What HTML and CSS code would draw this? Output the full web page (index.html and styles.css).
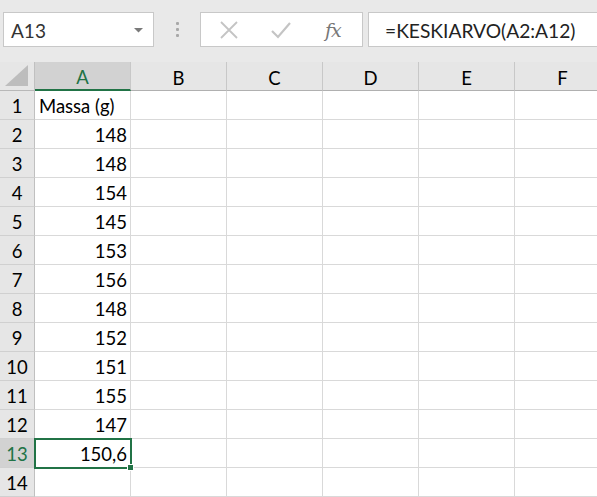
FILE: index.html
```html
<!DOCTYPE html>
<html>
<head>
<meta charset="utf-8">
<link rel="stylesheet" href="styles.css">
</head>
<body>
<div class="toolbar">
  <div class="namebox">
    <span class="name">A13</span>
    <svg class="dd" width="9" height="5" viewBox="0 0 9 5"><path d="M0 0 L9 0 L4.5 4.5 Z" fill="#7a7a7a"/></svg>
  </div>
  <div class="dots"><span></span><span></span><span></span></div>
  <div class="buttons">
    <svg class="btn-x" width="18" height="18" viewBox="0 0 18 18"><path d="M1 1 L17 17 M17 1 L1 17" stroke="#c4c4c4" stroke-width="1.8" fill="none"/></svg>
    <svg class="btn-v" width="20" height="18" viewBox="0 0 20 18"><path d="M1 10 L7 16 L19 2" stroke="#c4c4c4" stroke-width="2.2" fill="none"/></svg>
    <span class="fx">fx</span>
  </div>
  <div class="formula">=KESKIARVO(A2:A12)</div>
</div>
<div class="sheet">
  <div class="grid">
    <div class="corner"><svg width="26" height="22" viewBox="0 0 26 22"><path d="M24 0 L24 21 L1 21 Z" fill="#bdbdbd"/></svg></div>
    <div class="ch sel">A</div><div class="ch">B</div><div class="ch">C</div><div class="ch">D</div><div class="ch">E</div><div class="ch">F</div>

    <div class="rh">1</div><div class="c t">Massa (g)</div><div class="c"></div><div class="c"></div><div class="c"></div><div class="c"></div><div class="c"></div>
    <div class="rh">2</div><div class="c n">148</div><div class="c"></div><div class="c"></div><div class="c"></div><div class="c"></div><div class="c"></div>
    <div class="rh">3</div><div class="c n">148</div><div class="c"></div><div class="c"></div><div class="c"></div><div class="c"></div><div class="c"></div>
    <div class="rh">4</div><div class="c n">154</div><div class="c"></div><div class="c"></div><div class="c"></div><div class="c"></div><div class="c"></div>
    <div class="rh">5</div><div class="c n">145</div><div class="c"></div><div class="c"></div><div class="c"></div><div class="c"></div><div class="c"></div>
    <div class="rh">6</div><div class="c n">153</div><div class="c"></div><div class="c"></div><div class="c"></div><div class="c"></div><div class="c"></div>
    <div class="rh">7</div><div class="c n">156</div><div class="c"></div><div class="c"></div><div class="c"></div><div class="c"></div><div class="c"></div>
    <div class="rh">8</div><div class="c n">148</div><div class="c"></div><div class="c"></div><div class="c"></div><div class="c"></div><div class="c"></div>
    <div class="rh">9</div><div class="c n">152</div><div class="c"></div><div class="c"></div><div class="c"></div><div class="c"></div><div class="c"></div>
    <div class="rh">10</div><div class="c n">151</div><div class="c"></div><div class="c"></div><div class="c"></div><div class="c"></div><div class="c"></div>
    <div class="rh">11</div><div class="c n">155</div><div class="c"></div><div class="c"></div><div class="c"></div><div class="c"></div><div class="c"></div>
    <div class="rh">12</div><div class="c n">147</div><div class="c"></div><div class="c"></div><div class="c"></div><div class="c"></div><div class="c"></div>
    <div class="rh sel">13</div><div class="c n active">150,6<span class="handle"></span></div><div class="c"></div><div class="c"></div><div class="c"></div><div class="c"></div><div class="c"></div>
    <div class="rh">14</div><div class="c"></div><div class="c"></div><div class="c"></div><div class="c"></div><div class="c"></div><div class="c"></div>
  </div>
</div>
</body>
</html>
```

FILE: styles.css
```css
html, body {
  margin: 0;
  padding: 0;
  background: #ffffff;
  overflow: hidden;
}
body {
  width: 597px;
  height: 497px;
  font-family: Lato, "Open Sans", sans-serif;
  color: #000;
}
.toolbar {
  height: 62px;
  box-sizing: border-box;
  background: #e9e9e9;
  display: flex;
  align-items: flex-start;
  padding: 12px 0 0 3px;
}
.namebox {
  width: 151px;
  height: 35px;
  box-sizing: border-box;
  background: #fff;
  border: 1px solid #c8c8c8;
  display: flex;
  align-items: center;
  justify-content: space-between;
  padding: 1px 10px 0 7px;
  font-size: 19px;
  color: #333;
}
.dd { margin-top: 1px; }
.dots {
  width: 46px;
  height: 35px;
  display: flex;
  flex-direction: column;
  align-items: center;
  justify-content: center;
  gap: 3px;
}
.dots span {
  width: 3px;
  height: 3px;
  background: #a8a8a8;
  border-radius: 1px;
}
.buttons {
  width: 163px;
  height: 35px;
  box-sizing: border-box;
  background: #fff;
  border: 1px solid #c8c8c8;
  display: flex;
  align-items: center;
  padding-left: 19px;
}
.btn-x { margin-right: 33px; }
.btn-v { margin-right: 34px; }
.fx {
  font-family: "DejaVu Serif", "Liberation Serif", serif;
  font-style: italic;
  font-size: 19px;
  color: #777;
  letter-spacing: -1px;
}
.formula {
  margin-left: 5px;
  flex: 1;
  height: 35px;
  box-sizing: border-box;
  background: #fff;
  border: 1px solid #c8c8c8;
  border-right: none;
  display: flex;
  align-items: center;
  padding: 1px 0 0 16px;
  font-size: 19.2px;
  color: #222;
}
.grid {
  display: grid;
  grid-template-columns: 35px repeat(6, 96px);
  grid-auto-rows: 29px;
}
.grid > div {
  box-sizing: border-box;
  border-right: 1px solid #d9d9d9;
  border-bottom: 1px solid #d9d9d9;
  font-size: 18.5px;
  display: flex;
  align-items: center;
  padding-top: 2px;
}
.corner {
  background: #e6e6e6;
  border-right: 1px solid #c0c0c0 !important;
  border-bottom: 1px solid #b8b8b8 !important;
  justify-content: flex-end;
  align-items: flex-end !important;
  padding: 0 4px 3px 0 !important;
}
.corner svg { display: block; }
.ch {
  background: #e6e6e6;
  justify-content: center;
  border-right: 1px solid #c8c8c8 !important;
  border-bottom: 1px solid #b0b0b0 !important;
  padding-top: 3px !important;
}
.ch.sel {
  background: #d2d2d2;
  color: #217346;
  border-bottom: 2px solid #217346 !important;
}
.rh {
  background: #e6e6e6;
  justify-content: center;
  border-right: 1px solid #c0c0c0 !important;
  border-bottom: 1px solid #d0d0d0 !important;
}
.rh.sel {
  background: #d2d2d2;
  color: #217346;
}
.c.t {
  padding-left: 4px;
  white-space: nowrap;
}
.c.n {
  justify-content: flex-end;
  padding-right: 3px;
}
.c.active {
  position: relative;
  outline: 2px solid #217346;
  outline-offset: -1px;
  z-index: 2;
}
.handle {
  position: absolute;
  right: -4px;
  bottom: -4px;
  width: 5px;
  height: 5px;
  background: #217346;
  border: 1px solid #fff;
}
```
